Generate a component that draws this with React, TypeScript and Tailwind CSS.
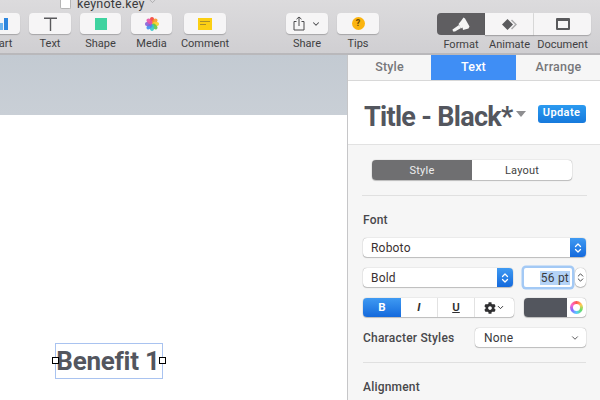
import React from "react";
import { ChevronDown, ChevronsUpDown } from "lucide-react";
import { FaCog } from "react-icons/fa";

const font = "font-['Roboto','Liberation_Sans',sans-serif]";

type ToolProps = { label: string; width: string; children: React.ReactNode };

const Tool = ({ label, width, children }: ToolProps) => (
  <div className={`flex flex-col items-center ${width}`}>
    <div className="flex h-[21px] w-full items-center justify-center rounded-[4px] bg-[#f6f5f6] shadow-[0_1px_1px_rgba(0,0,0,0.22)]">
      {children}
    </div>
    <span className="mt-[2px] whitespace-nowrap text-[11px] leading-[16px] text-[#3f3f42]">{label}</span>
  </div>
);

const Flower = () => (
  <svg width="14" height="14" viewBox="0 0 14 14">
    {["#f4423c", "#f79a2a", "#f6d32b", "#5fc84a", "#36c7c9", "#3f8ff0", "#8a5fd6", "#e552a8"].map((c, i) => (
      <ellipse key={c} cx="7" cy="3.4" rx="2.2" ry="3.4" fill={c} opacity="0.9" transform={`rotate(${i * 45} 7 7)`} />
    ))}
  </svg>
);

const Toolbar = () => (
  <div className="flex h-[55px] shrink-0 flex-col border-b-2 border-[#b9b8bb] bg-gradient-to-b from-[#dcdbdd] to-[#d0cfd2]">
    <div className="flex h-[15px] items-start pl-[60px]">
      <div className="-mt-[3px] h-[12px] w-[11px] rounded-b-[2px] border border-t-0 border-[#b5b5b5] bg-white" />
      <span className="-mt-[4px] ml-[6px] text-[12.5px] leading-[15px] tracking-[0.2px] text-[#3a3a3c]">keynote.key</span>
      <ChevronDown className="-mt-[3px] ml-[3px] text-[#9d9da0]" size={9} />
    </div>
    <div className="flex">
      <div className="ml-[-22px] flex gap-[9px]">
        <Tool label="Chart" width="w-[42px]">
          <svg width="9" height="14" viewBox="0 0 9 14" className="ml-[22px]">
            <rect x="0" y="6" width="3" height="7" fill="#6db4ee" />
            <rect x="4" y="1" width="4" height="12" fill="#2e86de" />
          </svg>
          <div className="w-[11px]" />
        </Tool>
        <Tool label="Text" width="w-[42px]">
          <svg width="15" height="14" viewBox="0 0 15 14" fill="none" stroke="#59595c" strokeWidth="1.4">
            <path d="M1 1.2h13M7.5 1.2V14" />
          </svg>
        </Tool>
        <Tool label="Shape" width="w-[41px]">
          <div className="h-[12px] w-[12px] bg-[#3fd3a0]" />
        </Tool>
      </div>
      <div className="ml-[10px]">
        <Tool label="Media" width="w-[41px]">
          <Flower />
        </Tool>
      </div>
      <div className="ml-[12px]">
        <Tool label="Comment" width="w-[42px]">
          <div className="flex h-[12px] w-[14px] flex-col gap-[2px] bg-[#fbcf14] px-[2px] pt-[3px]">
            <div className="h-px bg-[#a98f2a]" />
            <div className="h-px w-[6px] bg-[#a98f2a]" />
          </div>
        </Tool>
      </div>
      <div className="ml-[60px]">
        <Tool label="Share" width="w-[42px]">
          <svg width="12" height="15" viewBox="0 0 12 15" fill="none" stroke="#4a4a4d" strokeWidth="1">
            <path d="M3.5 5.5H1v8.5h10V5.5H8.5M6 10V1M3.5 3.2 6 1l2.5 2.2" />
          </svg>
          <ChevronDown className="ml-[6px] text-[#4a4a4d]" size={10} strokeWidth={2.5} />
        </Tool>
      </div>
      <div className="ml-[9px]">
        <Tool label="Tips" width="w-[42px]">
          <div className="flex h-[13px] w-[13px] items-center justify-center rounded-full bg-[#fbb40f] text-[9px] font-bold leading-none text-[#6b4a00]">
            ?
          </div>
        </Tool>
      </div>
      <div className="ml-[58px] flex">
        <div className="flex w-[48px] flex-col items-center">
          <div className="flex h-[22px] w-full items-center justify-center rounded-l-[4px] bg-[#5f5e61]">
            <svg width="18" height="15" viewBox="0 0 18 15" fill="#f4f4f4">
              <path d="M9 4 11.5 0.5 13 1.5 17.5 9.5 16.5 11.5 11 13 10.5 10.5 9 11.5 6.5 7z" />
              <path d="M7 8 9 11 3 14.5 1 14.5 0.5 12.5z" />
            </svg>
          </div>
          <span className="mt-[2px] text-[11px] leading-[16px] text-[#3f3f42]">Format</span>
        </div>
        <div className="flex w-[49px] flex-col items-center">
          <div className="flex h-[22px] w-full items-center justify-center border-r border-[#dcdcdc] bg-[#f6f5f6] shadow-[0_1px_1px_rgba(0,0,0,0.22)]">
            <svg width="17" height="13" viewBox="0 0 17 13">
              <path d="M11 1.5 16 6.5 11 11.5 10 10.5 14 6.5 10 2.5z" fill="#a9a9ab" />
              <path d="M6.5 1 12 6.5 6.5 12 1 6.5z" fill="#5a5a5d" />
            </svg>
          </div>
          <span className="mt-[2px] text-[11px] leading-[16px] text-[#3f3f42]">Animate</span>
        </div>
        <div className="flex w-[57px] flex-col items-center">
          <div className="flex h-[22px] w-full items-center justify-center rounded-r-[4px] bg-[#f6f5f6] shadow-[0_1px_1px_rgba(0,0,0,0.22)]">
            <div className="h-[12px] w-[14px] rounded-[1px] border-2 border-t-[3px] border-[#59595c]" />
          </div>
          <span className="mt-[2px] text-[11px] leading-[16px] text-[#3f3f42]">Document</span>
        </div>
      </div>
    </div>
  </div>
);

const Canvas = () => (
  <div className="flex w-[347px] shrink-0 flex-col">
    <div className="h-[60px] bg-gradient-to-b from-[#c3cad2] to-[#c9cfd6]" />
    <div className="relative flex-1 bg-white">
      <div className="absolute left-[55px] top-[228px] flex h-[36px] w-[108px] items-center justify-center whitespace-nowrap border border-[#a9c3f0] pr-[2px] text-[26px] font-bold tracking-[-0.25px] text-[#53565e]">
        Benefit 1
        <div className="absolute left-[-4px] top-[13px] h-[7px] w-[7px] border border-black bg-white" />
        <div className="absolute right-[-4px] top-[13px] h-[7px] w-[7px] border border-black bg-white" />
      </div>
    </div>
  </div>
);

const boxed = "rounded-[4px] bg-white shadow-[0_0_1px_rgba(0,0,0,0.45),0_1px_1px_rgba(0,0,0,0.2)]";

const Stepper = () => (
  <div className="flex h-full w-[16px] items-center justify-center rounded-r-[4px] bg-gradient-to-b from-[#3f9af2] to-[#1469dc]">
    <ChevronsUpDown className="text-white" size={12} strokeWidth={2.5} />
  </div>
);

const Panel = () => (
  <div className="flex flex-1 flex-col border-l border-[#c6c6c8] bg-[#f6f6f6]">
    <div className="flex h-[26px] shrink-0 border-b border-[#d8d8d8] text-[12.5px] font-medium tracking-[0.2px] text-[#77777a]">
      <div className="flex w-[83px] items-center justify-center">Style</div>
      <div className="flex w-[85px] items-center justify-center bg-[#3f8ef5] text-white">Text</div>
      <div className="flex flex-1 items-center justify-center">Arrange</div>
    </div>
    <div className="flex h-[64px] shrink-0 items-center border-b border-[#e2e2e2] bg-white pl-[16px] pt-[9px]">
      <span className="whitespace-nowrap text-[27px] font-bold leading-none tracking-[-0.7px] text-[#53565e]">Title - Black*</span>
      <div className="mb-[7px] ml-[3px] h-0 w-0 border-x-[5px] border-t-[6px] border-x-transparent border-t-[#8e8e90]" />
      <div className="mb-[7px] ml-[12px] flex h-[18px] w-[48px] items-center justify-center rounded-[3px] bg-gradient-to-b from-[#2b9af0] to-[#1679dc] text-[11px] font-semibold tracking-[0.4px] text-white">
        Update
      </div>
    </div>
    <div className="px-[24px] pb-[15px] pt-[15px]">
      <div className={`flex h-[20px] w-[200px] ${boxed} text-[11px] leading-none tracking-[0.2px]`}>
        <div className="flex w-[100px] items-center justify-center rounded-l-[4px] bg-[#6f6f71] text-[#eeeeee]">Style</div>
        <div className="flex flex-1 items-center justify-center text-[#3f3f42]">Layout</div>
      </div>
    </div>
    <div className="mx-[14px] h-px bg-[#e0e0e0]" />
    <div className="px-[15px]">
      <div className="mt-[16px] text-[12px] font-medium leading-[16px] tracking-[0.2px] text-[#48484b]">Font</div>
      <div className={`mt-[10px] flex h-[19px] items-center justify-between ${boxed}`}>
        <span className="pl-[8px] text-[12px] tracking-[0.2px] text-[#3a3030]">Roboto</span>
        <Stepper />
      </div>
      <div className="mt-[11px] flex h-[19px] items-center">
        <div className={`flex h-full w-[150px] items-center justify-between ${boxed}`}>
          <span className="pl-[8px] text-[12px] tracking-[0.2px] text-[#3a3030]">Bold</span>
          <Stepper />
        </div>
        <div className="ml-[11px] flex h-[19px] w-[48px] items-center justify-end rounded-[2px] bg-white pr-[2px] text-[12px] tracking-[0.2px] text-[#3a3a3c] shadow-[0_0_0_2.5px_#a3c9f5]">
          <span className="bg-[#b4d3f7] px-[1px] leading-[14px]">56 pt</span>
        </div>
        <div className={`ml-[3px] flex h-full w-[11px] items-center justify-center rounded-[5px] ${boxed}`}>
          <ChevronsUpDown className="text-[#3a3a3c]" size={11} strokeWidth={2} />
        </div>
      </div>
      <div className="mt-[11px] flex h-[19px]">
        <div className={`flex w-[151px] ${boxed} text-[11.5px] text-[#2f2f31]`}>
          <div className="flex w-[38px] items-center justify-center rounded-l-[4px] bg-gradient-to-b from-[#3f9af2] to-[#1469dc] font-bold text-white">B</div>
          <div className="flex w-[37px] items-center justify-center border-r border-[#e2e2e2] font-bold italic">I</div>
          <div className="flex w-[37px] items-center justify-center border-r border-[#e2e2e2] font-semibold underline">U</div>
          <div className="flex flex-1 items-center justify-center">
            <FaCog className="text-[#2f2f31]" size={12} />
            <ChevronDown size={9} strokeWidth={2.5} />
          </div>
        </div>
        <div className={`ml-[10px] flex w-[62px] overflow-hidden ${boxed}`}>
          <div className="w-[43px] bg-[#53565e]" />
          <div className="flex flex-1 items-center justify-center">
            <div className="h-[13px] w-[13px] rounded-full bg-[conic-gradient(#f55,#fc5,#6d6,#5cf,#86f,#f6c,#f55)] p-[3px]">
              <div className="h-full w-full rounded-full bg-white" />
            </div>
          </div>
        </div>
      </div>
      <div className="mt-[11px] flex h-[19px] items-center justify-between">
        <span className="text-[12px] font-medium tracking-[0.2px] text-[#48484b]">Character Styles</span>
        <div className={`flex h-full w-[111px] items-center justify-between pl-[9px] pr-[6px] text-[12px] tracking-[0.2px] text-[#3a3a3c] ${boxed}`}>
          None
          <ChevronDown size={10} strokeWidth={2} />
        </div>
      </div>
      <div className="mt-[15px] h-px bg-[#e0e0e0]" />
      <div className="mt-[16px] text-[12px] font-medium leading-[16px] tracking-[0.2px] text-[#48484b]">Alignment</div>
    </div>
  </div>
);

export default function App() {
  return (
    <div className={`flex h-[400px] w-[600px] flex-col overflow-hidden ${font}`}>
      <Toolbar />
      <div className="flex min-h-0 flex-1">
        <Canvas />
        <Panel />
      </div>
    </div>
  );
}
